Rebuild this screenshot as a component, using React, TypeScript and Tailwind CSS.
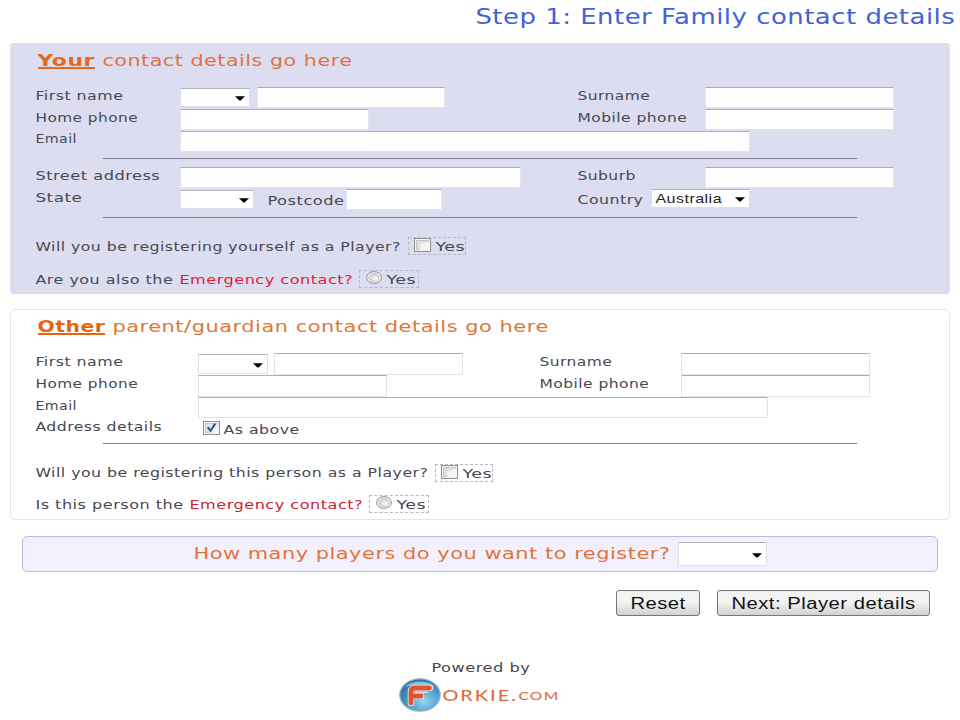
import { useLayoutEffect, useRef, useState } from 'react';
import type { ReactNode } from 'react';
import { clsx } from 'clsx';

// Wide text: the line is stretched horizontally to fill its box
function Label({ children, className }: { children: ReactNode; className?: string }) {
  const box = useRef<HTMLSpanElement>(null);
  const line = useRef<HTMLSpanElement>(null);
  const [scale, setScale] = useState(1);

  useLayoutEffect(() => {
    if (box.current && line.current) {
      setScale((box.current.clientWidth + 0.5) / line.current.offsetWidth);
    }
  }, []);

  return (
    <span ref={box} className={clsx('block shrink-0 text-left whitespace-nowrap', className)}>
      <span
        ref={line}
        className="inline-block origin-left"
        style={{ transform: `translateX(-0.6px) scaleX(${scale})` }}
      >
        {children}
      </span>
    </span>
  );
}

function Field({ className }: { className?: string }) {
  return (
    <input
      type="text"
      className={clsx(
        'block h-[21px] shrink-0 rounded-[1px] border border-[#e3e4ea] border-t-[#adadb3] bg-white px-1 outline-none',
        className,
      )}
    />
  );
}

function Select({ className, children }: { className?: string; children?: ReactNode }) {
  return (
    <div
      className={clsx(
        'flex shrink-0 items-center justify-between rounded-[1px] border border-[#dfe0e6] border-t-[#b3b3ba] bg-white pr-[4px] pl-1',
        className,
      )}
    >
      <span>{children}</span>
      <svg width="10" height="5" viewBox="0 0 10 5" className="mt-[2px]">
        <path d="M0 0.3h10L5.6 4.6h-1.2z" fill="#000" />
      </svg>
    </div>
  );
}

function Checkbox({ checked }: { checked?: boolean }) {
  return (
    <svg width="17" height="14" viewBox="0 0 17 14" className="shrink-0">
      <rect x="0.5" y="0.5" width="16" height="13" fill="#f4f4f4" stroke="#8e8f8f" />
      <rect x="2.5" y="2.5" width="12" height="9" fill={checked ? '#dbe3f3' : '#dcdee0'} stroke="#c4c8ce" />
      <path d="M6 12V6.5L15 3.5V12z" fill="#f3f3f3" />
      {checked && <path d="M4.8 6.2l2.7 3.6L12.3 2.6" fill="none" stroke="#3a4d92" strokeWidth="2.1" />}
    </svg>
  );
}

function Radio() {
  return (
    <svg width="16" height="13" viewBox="0 0 16 13" className="ml-px shrink-0">
      <ellipse cx="8" cy="6.5" rx="7.4" ry="5.9" fill="#f4f4f4" stroke="#8e8f8f" />
      <ellipse cx="8" cy="6.5" rx="5.2" ry="4" fill="#d6d8da" stroke="#bfc3c8" strokeWidth="0.8" />
      <ellipse cx="9" cy="7.4" rx="3" ry="2.2" fill="#f0f0f0" />
    </svg>
  );
}

function YesBox({ radio, className }: { radio?: boolean; className?: string }) {
  return (
    <div className={clsx('flex h-[18px] shrink-0 border border-dashed border-[#b9b9c2] pl-[5px]', className)}>
      {radio ? <Radio /> : <Checkbox />}
      <Label className="ml-[5px] w-[29px] leading-[18px]">Yes</Label>
    </div>
  );
}

function Rule({ className }: { className?: string }) {
  return <div className={clsx('h-px w-[754px] bg-[#80808a]', className ?? 'ml-[93px]')} />;
}

function ForkieLogo() {
  return (
    <svg width="42" height="34" viewBox="0 0 42 34" className="shrink-0">
      <defs>
        <radialGradient id="globe" cx="0.6" cy="0.7" r="0.65">
          <stop offset="0" stopColor="#93d6f0" />
          <stop offset="0.6" stopColor="#4d9fd0" />
          <stop offset="1" stopColor="#3474a8" />
        </radialGradient>
      </defs>
      <ellipse cx="21" cy="17" rx="20.2" ry="16.2" fill="url(#globe)" stroke="#9fb0be" strokeWidth="1.2" />
      <path d="M6 9C12 2 30 2 36 9C29 6 14 6 6 9z" fill="#b6e0f2" opacity="0.7" />
      <path
        d="M12 25V13.5Q12 10 16 10H31M12.5 18H22"
        fill="none"
        stroke="#e4edf3"
        strokeWidth="6.4"
        strokeLinecap="round"
        strokeLinejoin="round"
      />
      <path
        d="M12 25V13.5Q12 10 16 10H30.5M12.5 18H22"
        fill="none"
        stroke="#e2552a"
        strokeWidth="4.8"
        strokeLinecap="round"
        strokeLinejoin="round"
      />
      <path d="M15 14.2H29" stroke="#e4edf3" strokeWidth="1.2" />
    </svg>
  );
}

export default function App() {
  return (
    <div className="h-[720px] w-[960px] overflow-hidden bg-white font-['DejaVu_Sans',Verdana,sans-serif] text-[13px] leading-[18px] tracking-[0.4px] text-[#484850]">
      <header className="flex h-[43px] justify-end pt-px pr-1">
        <Label className="w-[480px] text-[21px] leading-[32px] text-[#4262d6]">
          Step 1: Enter Family contact details
        </Label>
      </header>

      <section className="ml-[10px] h-[251px] w-[940px] rounded-[4px] bg-[#dcddf0]">
        <h2 className="flex h-11 pt-[7px] pl-7 text-[16px] leading-[22px] text-[#dc7340]">
          <Label className="h-[19px] w-[57px] border-b-2 border-[#e8681c] font-bold text-[#e8681c]">Your</Label>
          <Label className="ml-2 w-[250px]">contact details go here</Label>
        </h2>
        <div className="flex h-[22px] pl-[26px]">
          <Label className="w-[87px]">First name</Label>
          <Select className="mt-px ml-[57px] h-[19px] w-[70px]" />
          <Field className="ml-[7px] w-[188px]" />
          <Label className="ml-[133px] w-[72px]">Surname</Label>
          <Field className="ml-[55px] w-[189px]" />
        </div>
        <div className="flex h-[22px] pl-[26px]">
          <Label className="w-[102px]">Home phone</Label>
          <Field className="ml-[42px] w-[189px]" />
          <Label className="ml-[209px] w-[109px]">Mobile phone</Label>
          <Field className="ml-[18px] w-[189px]" />
        </div>
        <div className="flex h-[27px] pl-[26px]">
          <Label className="-mt-px w-[41px]">Email</Label>
          <Field className="ml-[103px] w-[570px]" />
        </div>
        <Rule />
        <div className="mt-2 flex h-[22px] pl-[26px]">
          <Label className="w-[124px]">Street address</Label>
          <Field className="ml-5 w-[341px]" />
          <Label className="ml-[57px] w-[58px]">Suburb</Label>
          <Field className="ml-[69px] w-[189px]" />
        </div>
        <div className="flex h-7 pl-[26px]">
          <Label className="w-[46px]">State</Label>
          <Select className="mt-px ml-[98px] h-[19px] w-[74px]" />
          <Label className="mt-[3px] ml-[14px] w-[77px]">Postcode</Label>
          <Field className="ml-px w-[96px]" />
          <Label className="mt-[2px] ml-[136px] w-[65px]">Country</Label>
          <Select className="ml-2 h-[19px] w-[99px] font-['Liberation_Sans',Arial,sans-serif] text-[13.5px] text-[#222]">
            <Label className="w-[66px]">Australia</Label>
          </Select>
        </div>
        <Rule />
        <div className="mt-[19px] flex h-[33px] pl-[26px]">
          <Label className="mt-px w-[365px]">Will you be registering yourself as a Player?</Label>
          <YesBox className="ml-[7px] w-[58px]" />
        </div>
        <div className="flex pl-[26px]">
          <Label className="mt-px w-[137px]">Are you also the</Label>
          <Label className="mt-px ml-[7px] w-[173px] text-[#dc1e35]">Emergency contact?</Label>
          <YesBox radio className="ml-[6px] w-[60px]" />
        </div>
      </section>

      <section className="mt-[15px] ml-[10px] h-[211px] w-[940px] rounded-[5px] border-[1.5px] border-[#e4e4ec] bg-white">
        <h2 className="flex h-[43px] pt-[6px] pl-[27px] text-[16px] leading-[22px] text-[#dc7738]">
          <Label className="h-[19px] w-[67px] border-b-2 border-[#e8640e] font-bold text-[#e8640e]">Other</Label>
          <Label className="ml-2 w-[436px]">parent/guardian contact details go here</Label>
        </h2>
        <div className="flex h-[22px] pl-[25px]">
          <Label className="w-[87px]">First name</Label>
          <Select className="mt-px ml-[75px] h-[20px] w-[70px]" />
          <Field className="ml-[6px] h-[22px] w-[189px]" />
          <Label className="ml-[77px] w-[72px]">Surname</Label>
          <Field className="ml-[69px] h-[22px] w-[189px]" />
        </div>
        <div className="flex h-[22px] pl-[25px]">
          <Label className="w-[102px]">Home phone</Label>
          <Field className="ml-[60px] h-[22px] w-[189px]" />
          <Label className="ml-[153px] w-[109px]">Mobile phone</Label>
          <Field className="ml-8 h-[22px] w-[189px]" />
        </div>
        <div className="flex h-[22px] pl-[25px]">
          <Label className="w-[41px]">Email</Label>
          <Field className="ml-[121px] w-[570px]" />
        </div>
        <div className="flex h-6 pl-[25px]">
          <Label className="-mt-px w-[126px]">Address details</Label>
          <div className="ml-[41px] flex pt-[2px]">
            <Checkbox checked />
            <Label className="ml-1 w-[76px]">As above</Label>
          </div>
        </div>
        <Rule className="ml-[92px]" />
        <div className="mt-5 flex h-8 pl-[25px]">
          <Label className="w-[392px]">Will you be registering this person as a Player?</Label>
          <YesBox className="ml-[7px] w-[58px]" />
        </div>
        <div className="-mt-px flex pl-[25px]">
          <Label className="mt-px w-[148px]">Is this person the</Label>
          <Label className="mt-px ml-[6px] w-[173px] text-[#cc2233]">Emergency contact?</Label>
          <YesBox radio className="ml-[6px] w-[60px]" />
        </div>
      </section>

      <section className="mt-4 ml-[22px] flex h-9 w-[916px] rounded-[5px] border-[1.5px] border-[#bdbbdb] bg-[#f2f0fc] pl-[171px]">
        <Label className="w-[476px] text-[16px] leading-[34px] text-[#e0743c]">
          How many players do you want to register?
        </Label>
        <Select className="mt-[5px] ml-2 h-6 w-[89px]" />
      </section>

      <div className="mt-[18px] flex h-[69px] justify-end gap-[17px] pr-[30px] font-['Liberation_Sans',Arial,sans-serif] text-[16px] text-[#111]">
        <button
          type="button"
          className="flex h-[26px] w-[84px] justify-center rounded-[3px] border border-[#777] bg-linear-to-b from-[#f3f3f3] from-45% to-[#d2d2d2] pt-1"
        >
          <Label className="w-[55px]">Reset</Label>
        </button>
        <button
          type="button"
          className="flex h-[26px] w-[213px] justify-center rounded-[3px] border border-[#777] bg-linear-to-b from-[#f3f3f3] from-45% to-[#d2d2d2] pt-1"
        >
          <Label className="w-[184px]">Next: Player details</Label>
        </button>
      </div>

      <footer className="pl-[399px]">
        <Label className="ml-[33px] w-[98px]">Powered by</Label>
        <div className="mt-px flex font-[Lato,sans-serif] text-[#df6c40]">
          <ForkieLogo />
          <Label className="mt-2 ml-[2px] w-[75px] text-[15px] font-medium tracking-[1.5px]">ORKIE.</Label>
          <Label className="mt-[9px] ml-px w-[41px] text-[12px] font-medium tracking-[1px]">COM</Label>
        </div>
      </footer>
    </div>
  );
}
